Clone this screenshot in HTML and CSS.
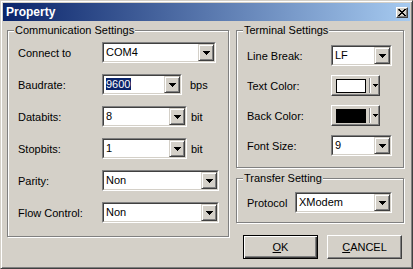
FILE: index.html
```html
<!DOCTYPE html>
<html lang="en">
<head>
    <meta charset="UTF-8">
    <title>Property</title>
    <link rel="stylesheet" href="styles.css">
</head>
<body>
<div class="window">
    <div class="titlebar">
        <span class="title">Property</span>
        <span class="close-btn">
            <svg width="8" height="7" viewBox="0 0 8 7"><path d="M0 0h2v1h1v1h2v-1h1v-1h2v1h-1v1h-1v1h-1v1h1v1h1v1h1v1h-2v-1h-1v-1h-2v1h-1v1h-2v-1h1v-1h1v-1h1v-1h-1v-1h-1z" fill="#000"/></svg>
        </span>
    </div>

    <div class="client">
        <!-- 左边：通讯设置 -->
        <div class="group group-comm">
            <span class="group-title">Communication Settings</span>
            <div class="row">
                <span class="label">Connect to</span>
                <div class="combo w-connect">
                    <div class="combo-field">
                        <span class="combo-text">COM4</span>
                        <span class="combo-btn"><svg width="7" height="4"><path d="M0 0h7v1H0zM1 1h5v1H1zM2 2h3v1H2zM3 3h1v1H3z"/></svg></span>
                    </div>
                </div>
            </div>
            <div class="row">
                <span class="label">Baudrate:</span>
                <div class="combo w-baud">
                    <div class="combo-field">
                        <span class="combo-text"><span class="sel">9600</span></span>
                        <span class="combo-btn"><svg width="7" height="4"><path d="M0 0h7v1H0zM1 1h5v1H1zM2 2h3v1H2zM3 3h1v1H3z"/></svg></span>
                    </div>
                </div>
                <span class="unit unit-wide">bps</span>
            </div>
            <div class="row">
                <span class="label">Databits:</span>
                <div class="combo w-bits">
                    <div class="combo-field">
                        <span class="combo-text">8</span>
                        <span class="combo-btn"><svg width="7" height="4"><path d="M0 0h7v1H0zM1 1h5v1H1zM2 2h3v1H2zM3 3h1v1H3z"/></svg></span>
                    </div>
                </div>
                <span class="unit">bit</span>
            </div>
            <div class="row">
                <span class="label">Stopbits:</span>
                <div class="combo w-bits">
                    <div class="combo-field">
                        <span class="combo-text">1</span>
                        <span class="combo-btn"><svg width="7" height="4"><path d="M0 0h7v1H0zM1 1h5v1H1zM2 2h3v1H2zM3 3h1v1H3z"/></svg></span>
                    </div>
                </div>
                <span class="unit">bit</span>
            </div>
            <div class="row">
                <span class="label">Parity:</span>
                <div class="combo w-wide">
                    <div class="combo-field">
                        <span class="combo-text">Non</span>
                        <span class="combo-btn"><svg width="7" height="4"><path d="M0 0h7v1H0zM1 1h5v1H1zM2 2h3v1H2zM3 3h1v1H3z"/></svg></span>
                    </div>
                </div>
            </div>
            <div class="row">
                <span class="label">Flow Control:</span>
                <div class="combo w-wide">
                    <div class="combo-field">
                        <span class="combo-text">Non</span>
                        <span class="combo-btn"><svg width="7" height="4"><path d="M0 0h7v1H0zM1 1h5v1H1zM2 2h3v1H2zM3 3h1v1H3z"/></svg></span>
                    </div>
                </div>
            </div>
        </div>

        <!-- 右边 -->
        <div class="side">
            <div class="group group-term">
                <span class="group-title">Terminal Settings</span>
                <div class="row">
                    <span class="label">Line Break:</span>
                    <div class="combo w-small">
                        <div class="combo-field">
                            <span class="combo-text">LF</span>
                            <span class="combo-btn"><svg width="7" height="4"><path d="M0 0h7v1H0zM1 1h5v1H1zM2 2h3v1H2zM3 3h1v1H3z"/></svg></span>
                        </div>
                    </div>
                </div>
                <div class="row">
                    <span class="label">Text Color:</span>
                    <div class="color-btn">
                        <span class="swatch swatch-white"></span>
                        <span class="color-sep"></span>
                        <svg width="5" height="3"><path d="M0 0h5v1H0zM1 1h3v1H1zM2 2h1v1H2z"/></svg>
                    </div>
                </div>
                <div class="row">
                    <span class="label">Back Color:</span>
                    <div class="color-btn">
                        <span class="swatch swatch-black"></span>
                        <span class="color-sep"></span>
                        <svg width="5" height="3"><path d="M0 0h5v1H0zM1 1h3v1H1zM2 2h1v1H2z"/></svg>
                    </div>
                </div>
                <div class="row">
                    <span class="label">Font Size:</span>
                    <div class="combo w-small">
                        <div class="combo-field">
                            <span class="combo-text">9</span>
                            <span class="combo-btn"><svg width="7" height="4"><path d="M0 0h7v1H0zM1 1h5v1H1zM2 2h3v1H2zM3 3h1v1H3z"/></svg></span>
                        </div>
                    </div>
                </div>
            </div>

            <div class="group group-transfer">
                <span class="group-title">Transfer Setting</span>
                <div class="row">
                    <span class="label label-short">Protocol</span>
                    <div class="combo w-proto">
                        <div class="combo-field">
                            <span class="combo-text">XModem</span>
                            <span class="combo-btn"><svg width="7" height="4"><path d="M0 0h7v1H0zM1 1h5v1H1zM2 2h3v1H2zM3 3h1v1H3z"/></svg></span>
                        </div>
                    </div>
                </div>
            </div>

            <div class="buttons">
                <button class="btn btn-default"><u>O</u>K</button>
                <button class="btn"><u>C</u>ANCEL</button>
            </div>
        </div>
    </div>
</div>
</body>
</html>
```

FILE: styles.css
```css
* {
    margin: 0;
    padding: 0;
    box-sizing: border-box;
}

body {
    font: 11px "Liberation Sans", Arial, sans-serif;
    color: #000;
    background: #d4d0c8;
}

/* 窗口外框 */
.window {
    width: 413px;
    height: 269px;
    background: #d4d0c8;
    border: 1px solid;
    border-color: #d4d0c8 #404040 #404040 #d4d0c8;
    box-shadow: inset 1px 1px #fff, inset -1px -1px #808080;
    padding: 2px;
}

.titlebar {
    height: 18px;
    display: flex;
    align-items: center;
    justify-content: space-between;
    padding: 0 2px 0 3px;
    background: linear-gradient(to right, #0a246a, #a6caf0);
}

.title {
    color: #fff;
    font-weight: bold;
    font-size: 12px;
}

.close-btn {
    width: 12px;
    height: 11px;
    display: flex;
    align-items: center;
    justify-content: center;
    background: #d4d0c8;
    border: 1px solid;
    border-color: #fff #404040 #404040 #fff;
    box-shadow: inset -1px -1px #808080;
}

.close-btn svg {
    display: block;
}

.client {
    display: grid;
    grid-template-columns: 222px 168px;
    column-gap: 7px;
    padding: 9px 0 0 4px;
}

/* 分组框 */
.group {
    position: relative;
    border: 1px solid #808080;
    box-shadow: inset 1px 1px #fff, 1px 1px #fff;
    display: flex;
    flex-direction: column;
}

.group-title {
    position: absolute;
    top: -8px;
    left: 6px;
    padding: 0 1px;
    line-height: 14px;
    background: #d4d0c8;
}

.group-comm {
    height: 207px;
    padding: 11px 0 0 10px;
    gap: 11px;
}

.side {
    display: flex;
    flex-direction: column;
}

.group-term {
    height: 138px;
    padding: 14px 0 0 10px;
    gap: 9px;
}

.group-transfer {
    height: 45px;
    margin-top: 10px;
    padding: 13px 0 0 10px;
}

.row {
    display: flex;
    align-items: center;
    height: 21px;
}

.label {
    width: 84px;
    flex-shrink: 0;
}

.label-short {
    width: 48px;
}

.unit {
    margin-left: 4px;
}

.unit-wide {
    margin-left: 8px;
}

/* 下拉框 */
.combo {
    height: 21px;
    border: 1px solid;
    border-color: #808080 #fff #fff #808080;
}

.combo-field {
    height: 100%;
    display: flex;
    background: #fff;
    border: 1px solid;
    border-color: #404040 #d4d0c8 #d4d0c8 #404040;
}

.combo-text {
    flex: 1;
    padding-left: 2px;
    line-height: 17px;
    white-space: nowrap;
    overflow: hidden;
}

.sel {
    background: #0a246a;
    color: #fff;
    padding: 0 1px 0 0;
}

.combo-btn {
    width: 16px;
    height: 17px;
    display: flex;
    align-items: center;
    justify-content: center;
    background: #d4d0c8;
    border: 1px solid;
    border-color: #d4d0c8 #404040 #404040 #d4d0c8;
    box-shadow: inset 1px 1px #fff, inset -1px -1px #808080;
}

.combo-btn svg {
    display: block;
}

.w-connect { width: 114px; }
.w-baud { width: 80px; }
.w-bits { width: 85px; }
.w-wide { width: 117px; }
.w-small { width: 61px; }
.w-proto { width: 97px; }

/* 颜色选择按钮 */
.color-btn {
    width: 49px;
    height: 21px;
    display: flex;
    align-items: center;
    padding-left: 4px;
    border: 1px solid;
    border-color: #fff #404040 #404040 #fff;
    box-shadow: inset -1px -1px #808080;
}

.swatch {
    width: 30px;
    height: 14px;
    border: 1px solid #000;
}

.swatch-white {
    background: #fff;
}

.swatch-black {
    background: #000;
}

.color-sep {
    width: 2px;
    height: 15px;
    margin: 0 2px 0 3px;
    border-left: 1px solid #808080;
    border-right: 1px solid #fff;
}

.color-btn svg {
    display: block;
}

/* 按钮 */
.buttons {
    display: flex;
    justify-content: flex-end;
    gap: 9px;
    margin-top: 12px;
    padding-right: 2px;
}

.btn {
    width: 75px;
    height: 24px;
    font: inherit;
    color: #000;
    background: #d4d0c8;
    border: 1px solid;
    border-color: #fff #404040 #404040 #fff;
    box-shadow: inset -1px -1px #808080;
}

.btn-default {
    border: 1px solid #000;
    box-shadow: inset 1px 1px #fff, inset -1px -1px #404040, inset -2px -2px #808080;
}
```
